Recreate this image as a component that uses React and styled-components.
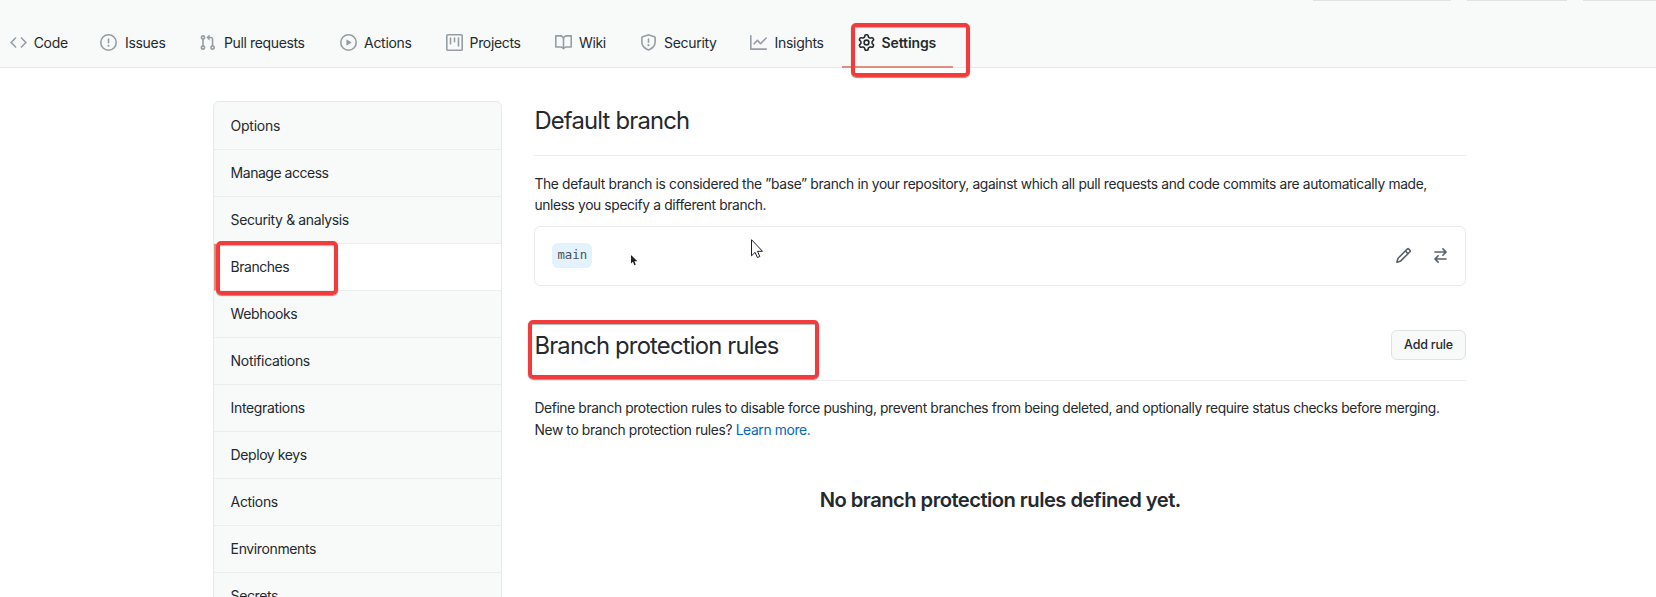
import React from "react";
import styled, { createGlobalStyle, css } from "styled-components";

const GlobalStyle = createGlobalStyle`
  * { box-sizing: border-box; }
  body {
    margin: 0;
    background: #fff;
    color: #24292e;
    font-family: Inter, "Liberation Sans", sans-serif;
    font-size: 14px;
    overflow: hidden;
  }
`;

const Page = styled.div`
  position: relative;
  height: 597px;
  overflow: hidden;
`;

const Header = styled.header`
  height: 68px;
  background: #f7faf9;
  border-bottom: 1px solid #e6e9e9;
  display: flex;
  flex-direction: column;
  justify-content: space-between;
`;

const RepoActions = styled.div`
  display: flex;
  gap: 16px;
  padding-left: 1313px;
  height: 1px;
`;

const ActionEdge = styled.span`
  flex: none;
  width: ${(p) => p.$width}px;
  background: #dfe2e2;
`;

const Tabs = styled.nav`
  display: flex;
  height: 49px;
  margin-left: -6.5px;
`;

const Tab = styled.a`
  position: relative;
  display: flex;
  flex: none;
  align-items: center;
  gap: ${(p) => p.$gap || 7.5}px;
  width: ${(p) => p.$width}px;
  padding: 0 0 1px 16.6px;
  white-space: nowrap;
  letter-spacing: ${(p) => p.$tracking}px;
  color: #24292e;
  svg { color: #959da5; }
  ${(p) =>
    p.$active &&
    css`
      padding-left: 16px;
      font-weight: 600;
      svg { color: #24292e; }
      &::after {
        content: "";
        position: absolute;
        left: 0;
        right: 0;
        bottom: -1px;
        height: 2px;
        background: #dd8f80;
      }
    `}
`;

const Glyph = styled.svg`
  flex: none;
  display: block;
  width: ${(p) => p.$size}px;
  height: ${(p) => p.$size}px;
  fill: currentColor;
`;

const Body = styled.div`
  display: flex;
  align-items: flex-start;
  gap: 32.4px;
  padding: 33px 190px 0 213px;
`;

const Menu = styled.nav`
  flex: none;
  width: 289px;
  border: 1px solid #e7eaea;
  border-radius: 6px;
  overflow: hidden;
  background: #f7faf9;
`;

const MenuItem = styled.a`
  display: flex;
  align-items: center;
  height: 47px;
  padding: 0 17px 2px ${(p) => (p.$active ? 14.6 : 16.6)}px;
  border-bottom: 1px solid #eceeee;
  letter-spacing: ${(p) => p.$tracking}px;
  &:first-child {
    height: 48px;
    padding-bottom: 0;
  }
  ${(p) =>
    p.$active &&
    css`
      background: #fff;
      border-left: 2px solid #dd8f80;
    `}
`;

const Content = styled.main`
  flex: 1;
  min-width: 0;
`;

const SectionHead = styled.div`
  display: flex;
  justify-content: space-between;
  align-items: flex-start;
  height: ${(p) => p.$height}px;
  margin-top: ${(p) => p.$gap || 0}px;
  padding-top: ${(p) => p.$inset}px;
  border-bottom: 1px solid #eceeee;
`;

const Title = styled.h2`
  margin: 0;
  font-size: 23.8px;
  font-weight: 400;
  line-height: 36px;
  letter-spacing: -0.8px;
  white-space: nowrap;
`;

const Text = styled.p`
  margin: ${(p) => p.$gap || 18}px 0 0;
  font-size: 13.8px;
  line-height: 21.3px;
  white-space: nowrap;
`;

const Line = styled.span`
  display: block;
  letter-spacing: ${(p) => p.$tracking}px;
`;

const Link = styled.a`
  color: #0366c0;
`;

const BranchBox = styled.div`
  display: flex;
  align-items: center;
  height: 60px;
  margin-top: 9.2px;
  padding: 0 16.5px 0 17px;
  border: 1px solid #e9ebec;
  border-radius: 6px;
`;

const BranchName = styled.code`
  display: flex;
  align-items: center;
  height: 25px;
  padding: 0 5px 1px;
  margin: 0 auto 1px 0;
  border-radius: 6px;
  background: #e4f2fd;
  color: #47525c;
  font-family: "DejaVu Sans Mono", "Liberation Mono", monospace;
  font-size: 12.4px;
`;

const IconButton = styled.button`
  display: flex;
  border: 0;
  padding: 0;
  margin: 0 0 1px 20px;
  background: none;
  color: #586069;
`;

const Button = styled.button`
  width: 75px;
  height: 30px;
  margin-top: 2.6px;
  padding: 0 0 1px;
  border: 1px solid #dfe2e2;
  border-radius: 6px;
  background: #f8faf9;
  color: #24292e;
  font: 500 12.5px Inter, "Liberation Sans", sans-serif;
  letter-spacing: -0.2px;
  white-space: nowrap;
`;

const Blank = styled.h3`
  margin: 45px 0 0;
  font-size: 20.2px;
  font-weight: 600;
  line-height: 28px;
  text-align: center;
  letter-spacing: -0.54px;
`;

const Highlight = styled.div`
  position: absolute;
  left: ${(p) => p.$x}px;
  top: ${(p) => p.$y}px;
  width: ${(p) => p.$w}px;
  height: ${(p) => p.$h}px;
  border: 4px solid #f23b3b;
  border-radius: 5px;
  box-shadow: 0 1px 1px rgba(60, 80, 80, 0.6), inset 0 1px 1px rgba(60, 80, 80, 0.4);
`;

const Pointer = styled.svg`
  position: absolute;
  left: ${(p) => p.$x}px;
  top: ${(p) => p.$y}px;
`;

const icons = {
  code: "M4.72 3.22a.75.75 0 011.06 1.06L2.06 8l3.72 3.72a.75.75 0 11-1.06 1.06L.47 8.53a.75.75 0 010-1.06l4.25-4.25zm6.56 0a.75.75 0 10-1.06 1.06L13.94 8l-3.72 3.72a.75.75 0 101.06 1.06l4.25-4.25a.75.75 0 000-1.06l-4.25-4.25z",
  issue: "M8 1.5a6.5 6.5 0 100 13 6.5 6.5 0 000-13zM0 8a8 8 0 1116 0A8 8 0 010 8zm9 3a1 1 0 11-2 0 1 1 0 012 0zm-.25-6.25a.75.75 0 00-1.5 0v3.5a.75.75 0 001.5 0v-3.5z",
  pull: "M7.177 3.073L9.573.677A.25.25 0 0110 .854v4.792a.25.25 0 01-.427.177L7.177 3.427a.25.25 0 010-.354zM3.75 2.5a.75.75 0 100 1.5.75.75 0 000-1.5zm-2.25.75a2.25 2.25 0 113 2.122v5.256a2.251 2.251 0 11-1.5 0V5.372A2.25 2.25 0 011.5 3.25zM11 2.5h-1V4h1a1 1 0 011 1v5.628a2.251 2.251 0 101.5 0V5A2.5 2.5 0 0011 2.5zm1 10.25a.75.75 0 111.5 0 .75.75 0 01-1.5 0zM3.75 12a.75.75 0 100 1.5.75.75 0 000-1.5z",
  play: "M1.5 8a6.5 6.5 0 1113 0 6.5 6.5 0 01-13 0zM8 0a8 8 0 100 16A8 8 0 008 0zM6.379 5.227A.25.25 0 006 5.442v5.117a.25.25 0 00.379.214l4.264-2.559a.25.25 0 000-.428L6.379 5.227z",
  project: "M1.75 0A1.75 1.75 0 000 1.75v12.5C0 15.216.784 16 1.75 16h12.5A1.75 1.75 0 0016 14.25V1.75A1.75 1.75 0 0014.25 0H1.75zM1.5 1.75a.25.25 0 01.25-.25h12.5a.25.25 0 01.25.25v12.5a.25.25 0 01-.25.25H1.75a.25.25 0 01-.25-.25V1.75zM11.75 3a.75.75 0 00-.75.75v7.5a.75.75 0 001.5 0v-7.5a.75.75 0 00-.75-.75zm-8.25.75a.75.75 0 011.5 0v5.5a.75.75 0 01-1.5 0v-5.5zM8 3a.75.75 0 00-.75.75v3.5a.75.75 0 001.5 0v-3.5A.75.75 0 008 3z",
  book: "M0 1.75A.75.75 0 01.75 1h4.253c1.227 0 2.317.59 3 1.501A3.744 3.744 0 0111.006 1h4.245a.75.75 0 01.75.75v10.5a.75.75 0 01-.75.75h-4.507a2.25 2.25 0 00-1.591.659l-.622.621a.75.75 0 01-1.06 0l-.622-.621A2.25 2.25 0 005.258 13H.75a.75.75 0 01-.75-.75V1.75zm8.755 3a2.25 2.25 0 012.25-2.25H14.5v9h-3.757c-.71 0-1.4.201-1.992.572l.004-7.322zm-1.504 7.324l.004-5.073-.002-2.253A2.25 2.25 0 005.003 2.5H1.5v9h3.757a3.75 3.75 0 011.994.574z",
  shield: "M7.467.133a1.75 1.75 0 011.066 0l5.25 1.68A1.75 1.75 0 0115 3.48V7c0 1.566-.32 3.182-1.303 4.682-.983 1.498-2.585 2.813-5.032 3.855a1.7 1.7 0 01-1.33 0c-2.447-1.042-4.049-2.357-5.032-3.855C1.32 10.182 1 8.566 1 7V3.48a1.75 1.75 0 011.217-1.667l5.25-1.68zm.61 1.429a.25.25 0 00-.153 0l-5.25 1.68a.25.25 0 00-.174.238V7c0 1.358.275 2.666 1.057 3.86.784 1.194 2.121 2.34 4.366 3.297a.2.2 0 00.154 0c2.245-.956 3.582-2.104 4.366-3.298C13.225 9.666 13.5 8.36 13.5 7V3.48a.25.25 0 00-.174-.237l-5.25-1.68zM9 10.5a1 1 0 11-2 0 1 1 0 012 0zm-.25-5.75a.75.75 0 10-1.5 0v3a.75.75 0 001.5 0v-3z",
  graph: "M1.5 1.75a.75.75 0 00-1.5 0v12.5c0 .414.336.75.75.75h14.5a.75.75 0 000-1.5H1.5V1.75zm14.28 2.53a.75.75 0 00-1.06-1.06L10 7.94 7.53 5.47a.75.75 0 00-1.06 0L3.22 8.72a.75.75 0 001.06 1.06L7 7.06l2.47 2.47a.75.75 0 001.06 0l5.25-5.25z",
  gear: "M7.429 1.525a6.593 6.593 0 011.142 0c.036.003.108.036.137.146l.289 1.105c.147.56.55.967.997 1.189.174.086.341.183.501.29.417.278.97.423 1.53.27l1.102-.303c.11-.03.175.016.195.046.219.31.41.641.573.989.014.031.022.11-.059.19l-.815.806c-.411.406-.562.957-.53 1.456a4.588 4.588 0 010 .582c-.032.499.119 1.05.53 1.456l.815.806c.08.08.073.159.059.19a6.494 6.494 0 01-.573.99c-.02.029-.086.074-.195.045l-1.103-.303c-.559-.153-1.112-.008-1.529.27-.16.107-.327.204-.5.29-.449.222-.851.628-.998 1.189l-.289 1.105c-.029.11-.101.143-.137.146a6.613 6.613 0 01-1.142 0c-.036-.003-.108-.037-.137-.146l-.289-1.105c-.147-.56-.55-.967-.997-1.189a4.502 4.502 0 01-.501-.29c-.417-.278-.97-.423-1.53-.27l-1.102.303c-.11.03-.175-.016-.195-.046a6.492 6.492 0 01-.573-.989c-.014-.031-.022-.11.059-.19l.815-.806c.411-.406.562-.957.53-1.456a4.587 4.587 0 010-.582c.032-.499-.119-1.05-.53-1.456l-.815-.806c-.08-.08-.073-.159-.059-.19a6.44 6.44 0 01.573-.99c.02-.029.086-.075.195-.045l1.103.303c.559.153 1.112.008 1.529-.27.16-.107.327-.204.5-.29.449-.222.851-.628.998-1.189l.289-1.105c.029-.11.101-.143.137-.146zM8 0c-.236 0-.47.01-.701.03-.743.065-1.29.615-1.458 1.261l-.29 1.106c-.017.066-.078.158-.211.224a5.994 5.994 0 00-.668.386c-.123.082-.233.09-.3.071L3.27 2.776c-.644-.177-1.392.02-1.82.63a7.977 7.977 0 00-.704 1.217c-.315.675-.111 1.422.363 1.891l.815.806c.05.048.098.147.088.294a6.084 6.084 0 000 .772c.01.147-.038.246-.088.294l-.815.806c-.474.469-.678 1.216-.363 1.891.2.428.436.835.704 1.218.428.609 1.176.806 1.82.63l1.103-.303c.066-.019.176-.011.299.071.213.143.436.272.668.386.133.066.194.158.212.224l.289 1.106c.169.646.715 1.196 1.458 1.26a8.094 8.094 0 001.402 0c.743-.064 1.29-.614 1.458-1.26l.29-1.106c.017-.066.078-.158.211-.224a5.98 5.98 0 00.668-.386c.123-.082.233-.09.3-.071l1.102.302c.644.177 1.392-.02 1.82-.63.268-.382.505-.789.704-1.217.315-.675.111-1.422-.364-1.891l-.814-.806c-.05-.048-.098-.147-.088-.294a6.1 6.1 0 000-.772c-.01-.147.039-.246.088-.294l.814-.806c.475-.469.679-1.216.364-1.891a7.992 7.992 0 00-.704-1.218c-.428-.609-1.176-.806-1.82-.63l-1.103.303c-.066.019-.176.011-.299-.071a5.991 5.991 0 00-.668-.386c-.133-.066-.194-.158-.212-.224L10.16 1.29C9.99.645 9.444.095 8.701.031A8.094 8.094 0 008 0zm1.5 8a1.5 1.5 0 11-3 0 1.5 1.5 0 013 0zM11 8a3 3 0 11-6 0 3 3 0 016 0z",
  pencil: "M11.013 1.427a1.75 1.75 0 012.474 0l1.086 1.086a1.75 1.75 0 010 2.474l-8.61 8.61c-.21.21-.47.364-.756.445l-3.251.93a.75.75 0 01-.927-.928l.929-3.25a1.75 1.75 0 01.445-.758l8.61-8.61zm1.414 1.06a.25.25 0 00-.354 0L10.811 3.75l1.439 1.44 1.263-1.263a.25.25 0 000-.354l-1.086-1.086zM11.189 6.25L9.75 4.81l-6.286 6.287a.25.25 0 00-.064.108l-.558 1.953 1.953-.558a.249.249 0 00.108-.064l6.286-6.286z",
  swap: "M5.22 14.78a.75.75 0 001.06-1.06L4.56 12h8.69a.75.75 0 000-1.5H4.56l1.72-1.72a.75.75 0 00-1.06-1.06l-3 3a.75.75 0 000 1.06l3 3zm5.56-6.5a.75.75 0 11-1.06-1.06l1.72-1.72H2.75a.75.75 0 010-1.5h8.69L9.72 2.28a.75.75 0 011.06-1.06l3 3a.75.75 0 010 1.06l-3 3z",
};

function Icon({ name, size = 17 }) {
  return (
    <Glyph viewBox="0 0 16 16" $size={size} aria-hidden="true">
      <path fillRule="evenodd" d={icons[name]} />
    </Glyph>
  );
}

const tabs = [
  { label: "Code", icon: "code", width: 90.4, tracking: -0.3, gap: 6.6 },
  { label: "Issues", icon: "issue", width: 98.4, tracking: -0.3 },
  { label: "Pull requests", icon: "pull", width: 140.7, tracking: -0.38, gap: 8.2 },
  { label: "Actions", icon: "play", width: 106, tracking: -0.3 },
  { label: "Projects", icon: "project", width: 109.5, tracking: -0.35, gap: 7 },
  { label: "Wiki", icon: "book", width: 84.5, tracking: -0.4, gap: 7 },
  { label: "Security", icon: "shield", width: 110.8, tracking: -0.3 },
  { label: "Insights", icon: "graph", width: 108.2, tracking: -0.3, gap: 7.2 },
  { label: "Settings", icon: "gear", width: 111, tracking: -0.1, gap: 6.5, active: true },
];

const menu = [
  { label: "Options", tracking: -0.25 },
  { label: "Manage access", tracking: -0.48 },
  { label: "Security & analysis", tracking: -0.38 },
  { label: "Branches", tracking: -0.48, active: true },
  { label: "Webhooks", tracking: -0.42 },
  { label: "Notifications", tracking: -0.32 },
  { label: "Integrations", tracking: -0.34 },
  { label: "Deploy keys", tracking: -0.42 },
  { label: "Actions", tracking: -0.34 },
  { label: "Environments", tracking: -0.38 },
  { label: "Secrets", tracking: -0.38 },
];

export default function App() {
  return (
    <Page>
      <GlobalStyle />
      <Header>
        <RepoActions>
          <ActionEdge $width={138} />
          <ActionEdge $width={100} />
          <ActionEdge $width={90} />
        </RepoActions>
        <Tabs>
          {tabs.map((t) => (
            <Tab key={t.label} $width={t.width} $gap={t.gap} $tracking={t.tracking} $active={t.active}>
              <Icon name={t.icon} />
              <span>{t.label}</span>
            </Tab>
          ))}
        </Tabs>
      </Header>
      <Body>
        <Menu>
          {menu.map((m) => (
            <MenuItem key={m.label} $tracking={m.tracking} $active={m.active}>
              {m.label}
            </MenuItem>
          ))}
        </Menu>
        <Content>
          <SectionHead $height={55} $inset={2}>
            <Title>Default branch</Title>
          </SectionHead>
          <Text>
            <Line $tracking={-0.34}>
              The default branch is considered the ”base” branch in your repository, against which all pull requests and code commits are automatically made,
            </Line>
            <Line $tracking={-0.36}>unless you specify a different branch.</Line>
          </Text>
          <BranchBox>
            <BranchName>main</BranchName>
            <IconButton aria-label="Rename branch"><Icon name="pencil" /></IconButton>
            <IconButton aria-label="Switch default branch"><Icon name="swap" /></IconButton>
          </BranchBox>
          <SectionHead $height={54} $gap={41} $inset={1}>
            <Title>Branch protection rules</Title>
            <Button>Add rule</Button>
          </SectionHead>
          <Text $gap={17.6}>
            <Line $tracking={-0.37}>
              Define branch protection rules to disable force pushing, prevent branches from being deleted, and optionally require status checks before merging.
            </Line>
            <Line $tracking={-0.35}>
              New to branch protection rules? <Link>Learn more.</Link>
            </Line>
          </Text>
          <Blank>No branch protection rules defined yet.</Blank>
        </Content>
      </Body>
      <Highlight $x={851} $y={23} $w={119} $h={54} />
      <Highlight $x={216} $y={241} $w={122} $h={54} />
      <Highlight $x={528} $y={320} $w={291} $h={59} />
      <Pointer $x={630} $y={255} width="8" height="12" viewBox="0 0 8 12">
        <path d="M1 0v8.5l2-1.8 1.3 3.5 1.5-.6-1.4-3.3h3z" fill="#222" />
      </Pointer>
      <Pointer $x={751} $y={239} width="13" height="20" viewBox="0 0 13 20">
        <path d="M.5.7v16.1l3.6-3.5 2.3 5.2 2.4-1-2.3-5.2h5z" fill="#fff" stroke="#1b1b2b" />
      </Pointer>
    </Page>
  );
}
